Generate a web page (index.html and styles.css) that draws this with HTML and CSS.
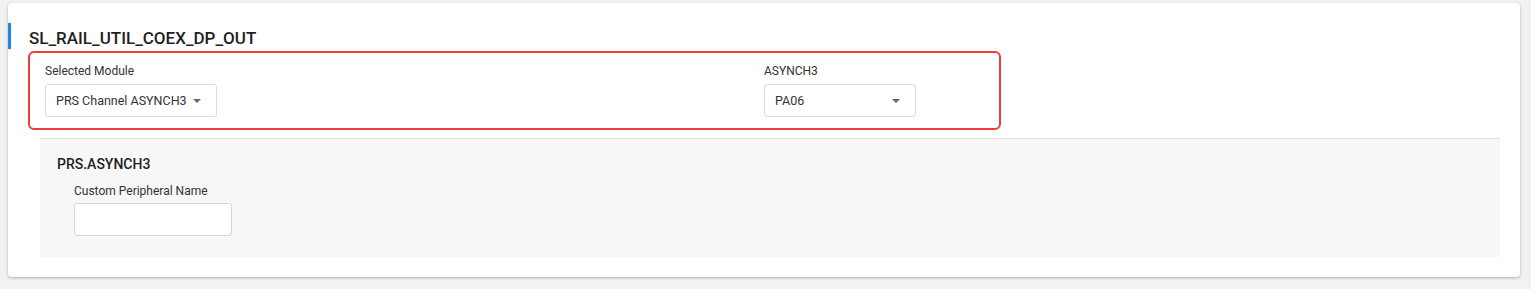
FILE: index.html
```html
<!DOCTYPE html>
<html>
<head>
<meta charset="utf-8">
<link rel="stylesheet" href="styles.css">
</head>
<body>
<div class="card">
  <div class="title">SL_RAIL_UTIL_COEX_DP_OUT</div>
  <div class="highlight">
    <div class="field">
      <div class="label">Selected Module</div>
      <div class="select sel-module"><span>PRS Channel ASYNCH3</span><i class="caret"></i></div>
    </div>
    <div class="field">
      <div class="label">ASYNCH3</div>
      <div class="select sel-pin"><span>PA06</span><i class="caret"></i></div>
    </div>
  </div>
  <div class="section">
    <div class="section-title">PRS.ASYNCH3</div>
    <div class="sub">
      <div class="label">Custom Peripheral Name</div>
      <div class="input"></div>
    </div>
  </div>
</div>
</body>
</html>
```
FILE: styles.css
```css
html, body { margin: 0; padding: 0; }
body {
  background: #f2f2f2;
  font-family: Roboto, "Liberation Sans", Arial, sans-serif;
  color: #222;
  padding: 3px 11px 12px 8px;
}
.card {
  background: #fff;
  border-radius: 4px;
  box-shadow: 0 1px 3px rgba(0,0,0,0.28);
  padding: 20px 20px 20px 0;
}
.title {
  border-left: 3px solid #1e88e5;
  padding-left: 18px;
  height: 26px;
  line-height: 30px;
  font-size: 17px;
  font-weight: 500;
  color: #1f1f1f;
}
.highlight {
  margin: 2px 0 0 20px;
  height: 75px;
  border: 2px solid #f23b3b;
  border-radius: 6px;
  display: grid;
  grid-template-columns: 719px 1fr;
  padding: 0 0 0 15px;
  box-sizing: content-box;
  width: 954px;
}
.field { padding-top: 10px; }
.label {
  font-size: 12px;
  color: #333;
  line-height: 16px;
  height: 16px;
}
.select {
  margin-top: 5px;
  height: 31px;
  border: 1px solid #dcdcdc;
  border-radius: 3px;
  display: flex;
  align-items: center;
  justify-content: space-between;
  padding: 0 15px 0 10px;
  font-size: 12.5px;
  color: #333;
  box-sizing: content-box;
}
.sel-module { width: 145px; }
.sel-pin { width: 125px; }
.caret {
  width: 0; height: 0;
  border-left: 4px solid transparent;
  border-right: 4px solid transparent;
  border-top: 4px solid #666;
  margin-top: 1px;
}
.section {
  margin: 8px 0 0 32px;
  background: #f7f7f7;
  border-top: 1px solid #dedede;
  height: 118px;
  padding-left: 17px;
}
.section-title {
  padding-top: 17px;
  font-size: 14px;
  font-weight: 500;
  color: #1f1f1f;
  line-height: 16px;
}
.sub { padding: 11px 0 0 17px; }
.input {
  margin-top: 4px;
  width: 156px;
  height: 31px;
  border: 1px solid #d6d6d6;
  border-radius: 3px;
  background: #fff;
}
```
